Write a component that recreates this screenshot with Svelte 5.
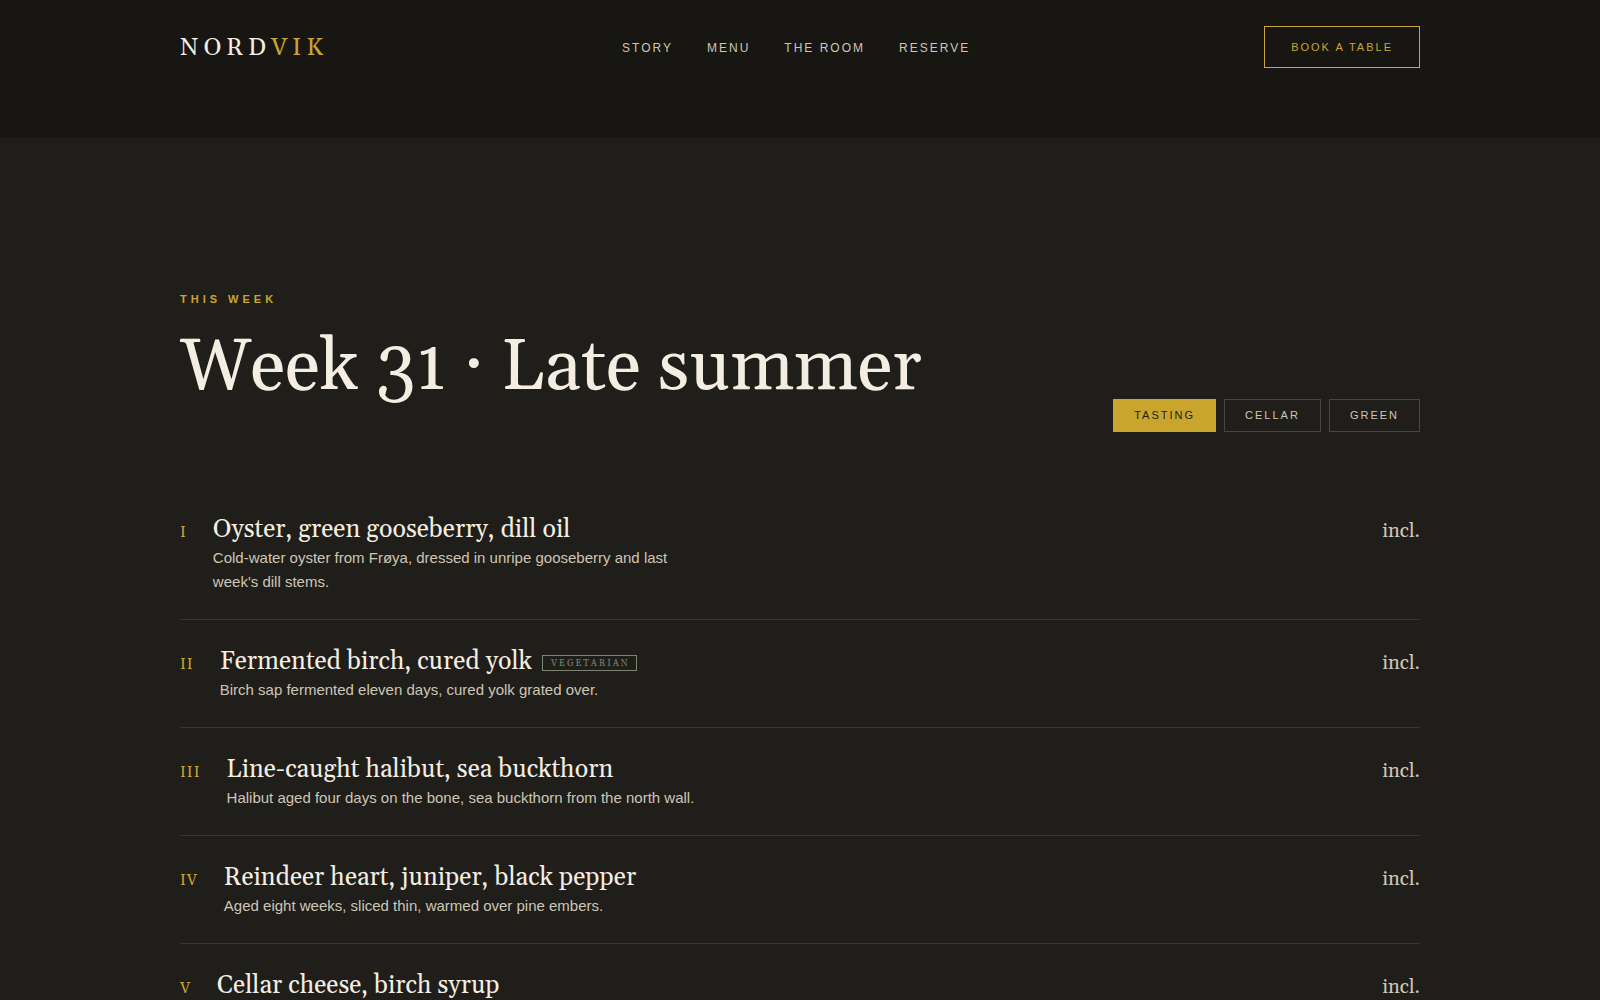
<script>
  const links = ['Story', 'Menu', 'The room', 'Reserve'];
  const tabs = ['Tasting', 'Cellar', 'Green'];
  let active = $state('Tasting');

  const dishes = [
    { num: 'I', name: 'Oyster, green gooseberry, dill oil', text: "Cold-water oyster from Frøya, dressed in unripe gooseberry and last week's dill stems." },
    { num: 'II', name: 'Fermented birch, cured yolk', tag: 'Vegetarian', text: 'Birch sap fermented eleven days, cured yolk grated over.' },
    { num: 'III', name: 'Line-caught halibut, sea buckthorn', text: 'Halibut aged four days on the bone, sea buckthorn from the north wall.' },
    { num: 'IV', name: 'Reindeer heart, juniper, black pepper', text: 'Aged eight weeks, sliced thin, warmed over pine embers.' },
    { num: 'V', name: 'Cellar cheese, birch syrup', text: '' }
  ];
</script>

<div class="page">
  <header class="top">
    <div class="wrap bar">
      <a class="logo" href="#top">NORD<span>VIK</span></a>
      <nav>
        {#each links as link}
          <a href="#{link.toLowerCase().replace(' ', '-')}">{link}</a>
        {/each}
      </nav>
      <button class="book" type="button">Book a table</button>
    </div>
  </header>

  <main>
    <div class="wrap">
      <div class="head">
        <div>
          <p class="eyebrow">This week</p>
          <h1>Week 31 · Late summer</h1>
        </div>
        <div class="tabs">
          {#each tabs as tab}
            <button type="button" class="tab" class:active={tab === active} aria-pressed={tab === active} onclick={() => (active = tab)}>{tab}</button>
          {/each}
        </div>
      </div>

      <ul>
        {#each dishes as dish}
          <li>
            <span class="num">{dish.num}</span>
            <div class="body">
              <h2>{dish.name}{#if dish.tag}<span class="tag">{dish.tag}</span>{/if}</h2>
              <p>{dish.text}</p>
            </div>
            <span class="price">incl.</span>
          </li>
        {/each}
      </ul>
    </div>
  </main>
</div>

<style>
  :global(body) {
    background: #171613;
  }
  .page {
    height: 100vh;
    overflow: hidden;
    font-family: 'Liberation Sans', Arial, sans-serif;
    color: #f3ede2;
  }
  .wrap {
    max-width: 1240px;
    margin: 0 auto;
  }
  .top {
    padding: 26px 40px 70px;
  }
  .bar {
    display: flex;
    align-items: center;
    justify-content: space-between;
  }
  a {
    color: inherit;
    text-decoration: none;
  }
  button {
    font-family: inherit;
    font-size: 11px;
    letter-spacing: 2px;
    text-transform: uppercase;
    border-radius: 0;
    background: transparent;
    cursor: pointer;
  }
  .logo {
    padding-top: 2px;
    font-family: Georgia, Gelasio, 'Liberation Serif', serif;
    font-size: 24px;
    line-height: 32px;
    letter-spacing: 5px;
  }
  .logo span {
    color: #c9a52e;
  }
  nav {
    display: flex;
    gap: 34px;
    padding-top: 2px;
    font-size: 12px;
    line-height: 20px;
    letter-spacing: 2px;
    text-transform: uppercase;
    color: #cdc6b6;
  }
  .book {
    height: 42px;
    padding: 0 26px;
    border: 1px solid #c9a540;
    color: #c9a52e;
  }
  main {
    background: #201e1a;
    padding: 150px 40px 0;
    min-height: 100vh;
  }
  .head {
    display: flex;
    align-items: flex-end;
    justify-content: space-between;
    padding-bottom: 56px;
  }
  .eyebrow {
    margin: 0;
    font-size: 11px;
    line-height: 22px;
    font-weight: 700;
    letter-spacing: 4px;
    text-transform: uppercase;
    color: #c9a52e;
  }
  h1 {
    margin: 18px 0 24px;
    font-family: Georgia, Gelasio, 'Liberation Serif', serif;
    font-weight: 400;
    font-size: 72px;
    line-height: 80px;
  }
  .tabs {
    display: flex;
    gap: 8px;
  }
  .tab {
    height: 33px;
    padding: 0 20px 2px;
    border: 1px solid #48463f;
    color: #cdc6b6;
  }
  .tab.active {
    background: #c9a52e;
    border-color: #c9a52e;
    color: #201e1a;
  }
  ul {
    list-style: none;
    margin: 0;
    padding: 0;
  }
  li {
    display: flex;
    align-items: baseline;
    gap: 26px;
    padding: 27px 0 25px;
    border-bottom: 1px solid #383630;
  }
  .num {
    font-family: Georgia, Gelasio, 'Liberation Serif', serif;
    font-size: 15px;
    line-height: 20px;
    letter-spacing: 1px;
    color: #c9a52e;
  }
  .body {
    flex: 1;
  }
  h2 {
    display: flex;
    align-items: center;
    gap: 10px;
    margin: 0 0 1px;
    font-family: Georgia, Gelasio, 'Liberation Serif', serif;
    font-weight: 400;
    font-size: 25px;
    line-height: 30px;
  }
  .tag {
    margin-top: 2px;
    padding: 1px 6px 0 8px;
    border: 1px solid #7d8570;
    font-size: 9px;
    line-height: 13px;
    letter-spacing: 2px;
    text-transform: uppercase;
    color: #7d8570;
  }
  p {
    margin: 0;
  }
  .body p {
    max-width: 480px;
    min-height: 24px;
    font-size: 15px;
    line-height: 24px;
    color: #cdc6b6;
  }
  .price {
    font-family: Georgia, Gelasio, 'Liberation Serif', serif;
    font-size: 20px;
    line-height: 28px;
    color: #cdc6b6;
  }
</style>
